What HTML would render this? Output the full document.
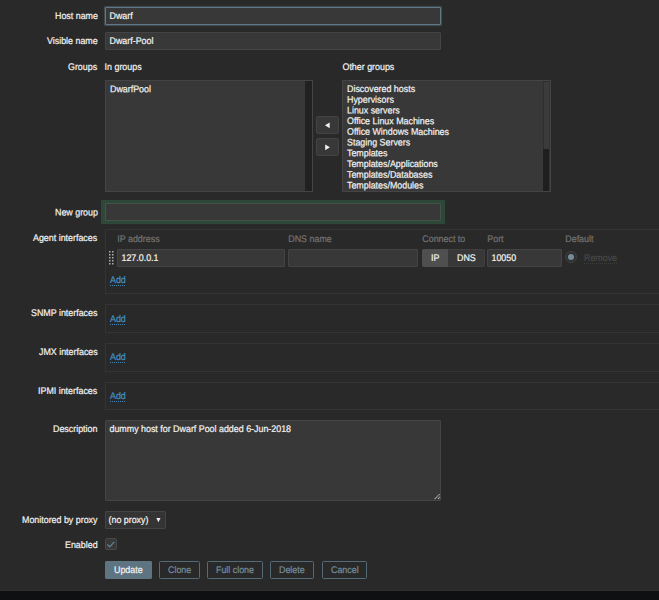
<!DOCTYPE html>
<html>
<head>
<meta charset="utf-8">
<title>Host</title>
<style>
html,body{margin:0;padding:0;}
html{overflow:hidden;background:#292929;}
body{-webkit-text-stroke:0.2px;width:659px;height:600px;overflow:hidden;background:#292929;color:#f2f2f2;
  font-family:"Liberation Sans",sans-serif;font-size:8.9px;line-height:18px;position:relative;}
*{box-sizing:border-box;}
.a{position:absolute;white-space:nowrap;}
.lbl{position:absolute;left:0;width:97.5px;text-align:right;height:18px;line-height:18px;white-space:nowrap;}
.inp{position:absolute;--dx:-0.5px;border-radius:1px;height:18px;background:#383838;border:1px solid #444;padding:0 4px;line-height:16px;white-space:nowrap;overflow:hidden;}
.inp.focus{border-color:#607886;box-shadow:0 0 0.8px 0.3px rgba(96,120,134,0.45);}
.hdr{position:absolute;--dx:-0.7px;color:#737373;height:14px;line-height:14px;white-space:nowrap;}
.box{position:absolute;left:105px;width:555px;border:1px solid #343434;}
.add{position:absolute;color:#4291c6;line-height:10px;height:11px;border-bottom:1px dotted #3f86b6;}
.sel{position:absolute;top:80px;height:112px;background:#383838;border:1px solid #444;}
.sel .opt{position:absolute;left:4px;line-height:10.72px;height:10.72px;white-space:nowrap;}
.abtn{position:absolute;left:316px;width:23px;height:18px;background:#383838;border:1px solid #434343;border-radius:2px;}
.btn{position:absolute;top:561px;height:18px;line-height:16px;text-align:center;border:1px solid #546a76;border-radius:1.5px;color:#768d99;}
.btn.main{background:#5e7480;border-color:#5e7480;border-radius:1px;color:#f2f2f2;}
.t{display:inline-block;line-height:1;transform:translate(var(--dx,0px),var(--dy,0px)) scaleY(1.08) rotate(0.03deg);transform-origin:0 84.6%;}
</style>
</head>
<body>

<!-- Host name -->
<div class="lbl" style="top:7px"><span class="t">Host name</span></div>
<div class="inp focus" style="left:105px;top:7px;width:336px"><span class="t">Dwarf</span></div>

<!-- Visible name -->
<div class="lbl" style="top:32px"><span class="t">Visible name</span></div>
<div class="inp" style="left:105px;top:32px;width:336px"><span class="t">Dwarf-Pool</span></div>

<!-- Groups -->
<div class="lbl" style="top:58px"><span class="t">Groups</span></div>
<div class="a" style="left:105px;top:58px;--dx:-0.4px"><span class="t">In groups</span></div>
<div class="a" style="left:343px;top:58px;--dx:-0.5px"><span class="t">Other groups</span></div>

<div class="sel" style="left:105px;width:208px">
  <div class="opt" style="top:3px;--dy:0.2px"><span class="t">DwarfPool</span></div>
  <div class="a" style="right:0;top:0;width:7px;height:110px;background:#212121"></div>
</div>

<div class="abtn" style="top:116px"><svg class="a" style="left:8px;top:5px" width="6" height="7" viewBox="0 0 6 7"><path d="M4.7 0.4 L0 3.3 L4.7 6.2 Z" fill="#f2f2f2"/></svg></div>
<div class="abtn" style="top:138px"><svg class="a" style="left:8px;top:5px" width="6" height="7" viewBox="0 0 6 7"><path d="M0.2 0.4 L4.9 3.3 L0.2 6.2 Z" fill="#f2f2f2"/></svg></div>

<div class="sel" style="left:342px;width:209px">
  <div class="opt" style="top:3px;--dy:0.00px"><span class="t">Discovered hosts</span></div>
  <div class="opt" style="top:13px;--dy:0.72px"><span class="t">Hypervisors</span></div>
  <div class="opt" style="top:24px;--dy:0.44px"><span class="t">Linux servers</span></div>
  <div class="opt" style="top:35px;--dy:0.16px"><span class="t">Office Linux Machines</span></div>
  <div class="opt" style="top:45px;--dy:0.88px"><span class="t">Office Windows Machines</span></div>
  <div class="opt" style="top:56px;--dy:0.60px"><span class="t">Staging Servers</span></div>
  <div class="opt" style="top:67px;--dy:0.32px"><span class="t">Templates</span></div>
  <div class="opt" style="top:78px;--dy:0.04px"><span class="t">Templates/Applications</span></div>
  <div class="opt" style="top:88px;--dy:0.76px"><span class="t">Templates/Databases</span></div>
  <div class="opt" style="top:99px;--dy:0.48px"><span class="t">Templates/Modules</span></div>
  <div class="a" style="right:0;top:0;width:7px;height:110px;background:#3b3b3b;border:1px solid #2f2f2f;border-right-color:#333;border-bottom:0"></div>
  <div class="a" style="right:1px;top:68px;width:6px;height:42px;background:#1f1f1f"></div>
</div>

<!-- New group -->
<div class="lbl" style="top:203px;--dy:0.5px"><span class="t">New group</span></div>
<div class="a" style="left:101px;top:200px;width:344px;height:24px;background:#2d4739"></div>
<div class="inp" style="left:105px;top:203px;width:336px;height:18px;border-color:#44524a"></div>

<!-- Agent interfaces -->
<div class="lbl" style="top:229px"><span class="t">Agent interfaces</span></div>
<div class="box" style="top:229px;height:65px"></div>
<div class="hdr" style="left:118px;top:232px"><span class="t">IP address</span></div>
<div class="hdr" style="left:289px;top:232px"><span class="t">DNS name</span></div>
<div class="hdr" style="left:422.5px;top:232px"><span class="t">Connect to</span></div>
<div class="hdr" style="left:488px;top:232px"><span class="t">Port</span></div>
<div class="hdr" style="left:566px;top:232px"><span class="t">Default</span></div>

<svg class="a" style="left:108px;top:250px" width="7" height="16" viewBox="0 0 7 16">
  <g fill="#b0b0b0">
    <rect x="1" y="1" width="1.5" height="1.5"/><rect x="4" y="1" width="1.5" height="1.5"/>
    <rect x="1" y="4" width="1.5" height="1.5"/><rect x="4" y="4" width="1.5" height="1.5"/>
    <rect x="1" y="7" width="1.5" height="1.5"/><rect x="4" y="7" width="1.5" height="1.5"/>
    <rect x="1" y="10" width="1.5" height="1.5"/><rect x="4" y="10" width="1.5" height="1.5"/>
    <rect x="1" y="13" width="1.5" height="1.5"/><rect x="4" y="13" width="1.5" height="1.5"/>
  </g>
</svg>
<div class="inp" style="left:117px;top:249px;width:168px"><span class="t">127.0.0.1</span></div>
<div class="inp" style="left:288px;top:249px;width:130px"></div>
<div class="a" style="left:422px;top:249px;width:63px;height:18px;background:#383838;border:1px solid #404040;border-radius:1.5px"></div>
<div class="a" style="left:422px;top:249px;width:26px;height:18px;background:#4f4f4f;border-radius:2px 0 0 2px;text-align:center;line-height:18px"><span class="t">IP</span></div>
<div class="a" style="left:448px;top:249px;width:37px;height:18px;text-align:center;line-height:18px"><span class="t">DNS</span></div>
<div class="inp" style="left:487px;top:249px;width:75px"><span class="t">10050</span></div>
<div class="a" style="left:565px;top:251px;width:12px;height:12px;border:1px solid #414141;border-radius:6px;background:#303030"></div>
<div class="a" style="left:568px;top:254px;width:6px;height:6px;border-radius:3px;background:#768d99"></div>
<div class="add" style="left:583.5px;top:253px;color:#484848;border-bottom-color:#3c3c3c"><span class="t">Remove</span></div>
<div class="add" style="left:109.5px;top:275px"><span class="t">Add</span></div>

<!-- SNMP -->
<div class="lbl" style="top:304px"><span class="t">SNMP interfaces</span></div>
<div class="box" style="top:304px;height:29px"></div>
<div class="add" style="left:109.5px;top:314px"><span class="t">Add</span></div>

<!-- JMX -->
<div class="lbl" style="top:343px"><span class="t">JMX interfaces</span></div>
<div class="box" style="top:343px;height:29px"></div>
<div class="add" style="left:109.5px;top:352px"><span class="t">Add</span></div>

<!-- IPMI -->
<div class="lbl" style="top:382px"><span class="t">IPMI interfaces</span></div>
<div class="box" style="top:382px;height:28px"></div>
<div class="add" style="left:109.5px;top:391px"><span class="t">Add</span></div>

<!-- Description -->
<div class="lbl" style="top:420px"><span class="t">Description</span></div>
<div class="inp" style="left:105px;top:420px;width:336px;height:81px;line-height:17px"><span class="t">dummy host for Dwarf Pool added 6-Jun-2018</span></div>
<svg class="a" style="left:432px;top:493px" width="9" height="7" viewBox="0 0 9 7"><path d="M2.7 5.8 L8 1 M6.2 5.8 L8 4" stroke="#c4c4c4" stroke-width="1.1" stroke-dasharray="1.2 0.6" fill="none"/></svg>

<!-- Monitored by proxy -->
<div class="lbl" style="top:511px"><span class="t">Monitored by proxy</span></div>
<div class="inp" style="left:105px;top:511px;width:61px;padding:0 3px;background:#343434"><span class="t">(no proxy)</span></div>
<svg class="a" style="left:156px;top:518px" width="5" height="5" viewBox="0 0 5 5"><path d="M0.3 0 L4.5 0 L2.4 4.2 Z" fill="#f2f2f2"/></svg>

<!-- Enabled -->
<div class="lbl" style="top:536px"><span class="t">Enabled</span></div>
<div class="a" style="left:105px;top:538px;width:12px;height:12px;background:#383838;border:1px solid #494949;border-radius:2px"></div>
<svg class="a" style="left:105px;top:538px" width="12" height="12" viewBox="0 0 12 12"><path d="M2.2 6.6 L4.8 8.8 L9.3 3.9" stroke="#5c7f93" stroke-width="1.35" fill="none"/></svg>

<!-- Buttons -->
<div class="btn main" style="left:105px;width:47px"><span class="t">Update</span></div>
<div class="btn" style="left:159px;width:41px"><span class="t">Clone</span></div>
<div class="btn" style="left:207px;width:56px"><span class="t">Full clone</span></div>
<div class="btn" style="left:270px;width:44px"><span class="t">Delete</span></div>
<div class="btn" style="left:322px;width:45px"><span class="t">Cancel</span></div>

<!-- footer -->
<div class="a" style="left:0;top:590px;width:659px;height:10px;background:#0e1012;border-top:1px solid #2e2e2e"></div>

</body>
</html>
